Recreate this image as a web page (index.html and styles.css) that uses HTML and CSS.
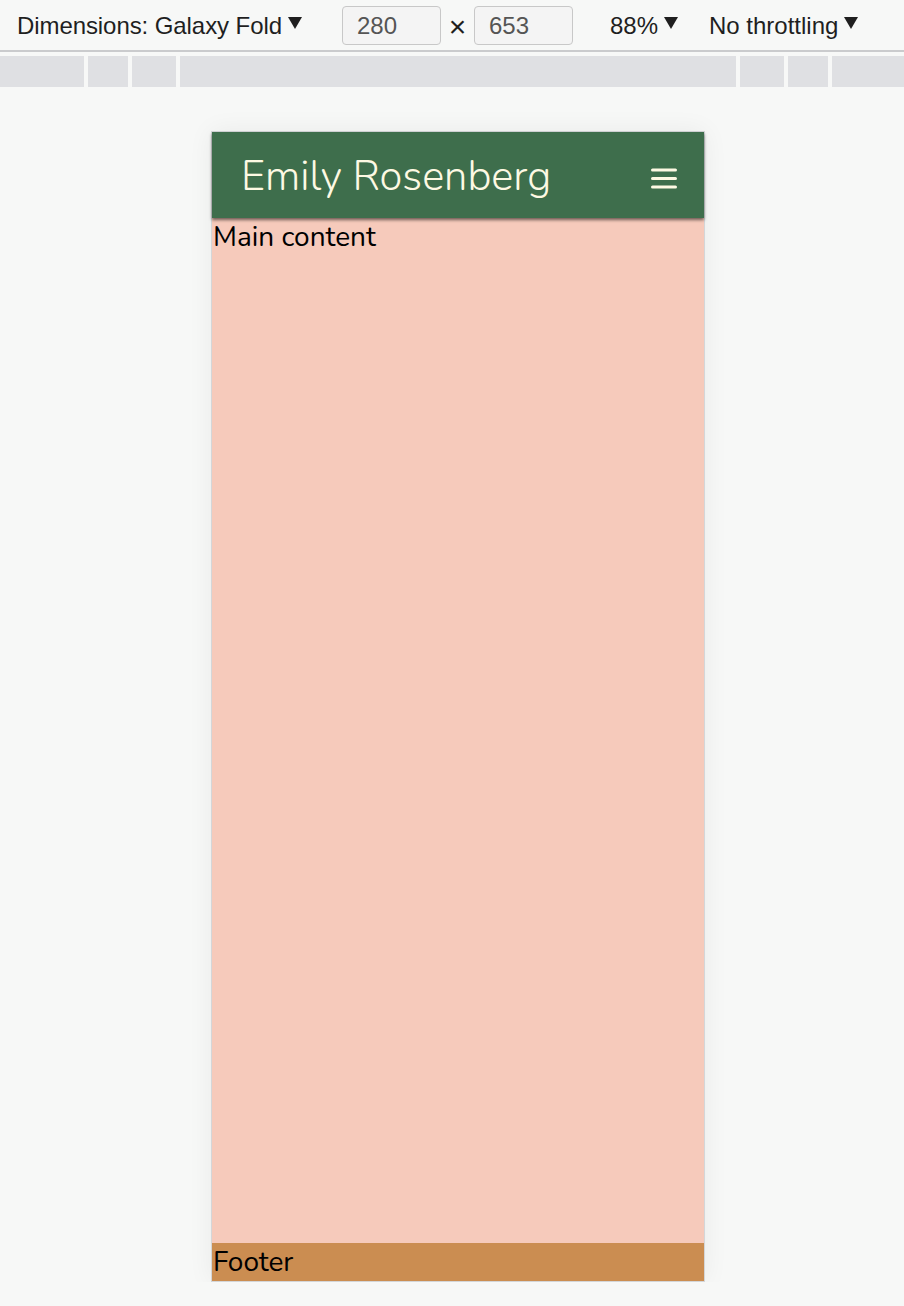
FILE: index.html
```html
<!DOCTYPE html>
<html lang="en">
<head>
<meta charset="utf-8">
<title>Emily Rosenberg</title>
<link rel="stylesheet" href="styles.css">
</head>
<body>
<div class="toolbar">
  <span class="tb-item dims">Dimensions: Galaxy Fold<svg class="caret" width="14" height="12" viewBox="0 0 14 12"><polygon points="0,0 14,0 7,12" /></svg></span>
  <span class="tb-input">280</span>
  <span class="times">&#215;</span>
  <span class="tb-input">653</span>
  <span class="tb-item zoom">88%<svg class="caret" width="14" height="12" viewBox="0 0 14 12"><polygon points="0,0 14,0 7,12" /></svg></span>
  <span class="tb-item throttle">No throttling<svg class="caret" width="14" height="12" viewBox="0 0 14 12"><polygon points="0,0 14,0 7,12" /></svg></span>
</div>
<div class="ruler">
  <div class="seg s1"></div>
  <div class="seg s2"></div>
  <div class="seg s3"></div>
  <div class="seg s4"></div>
  <div class="seg s5"></div>
  <div class="seg s6"></div>
  <div class="seg s7"></div>
</div>
<div class="stage">
  <div class="device">
    <header class="site-header">
      <span class="site-name">Emily Rosenberg</span>
      <svg class="burger" width="26" height="21" viewBox="0 0 26 21" aria-hidden="true">
        <line x1="1.5" y1="2" x2="24.5" y2="2" />
        <line x1="1.5" y1="10.5" x2="24.5" y2="10.5" />
        <line x1="1.5" y1="19" x2="24.5" y2="19" />
      </svg>
    </header>
    <main class="site-main">Main content</main>
    <footer class="site-footer">Footer</footer>
  </div>
</div>
</body>
</html>
```

FILE: styles.css
```css
html, body {
  margin: 0;
  padding: 0;
  background: #f7f8f7;
}

body {
  font-family: "Liberation Sans", Arial, sans-serif;
}

.toolbar {
  height: 50px;
  display: flex;
  align-items: center;
  border-bottom: 2px solid #cacbcd;
  font-size: 24px;
  color: #1f1f1f;
  box-sizing: content-box;
}

.tb-item {
  white-space: nowrap;
  display: flex;
  align-items: center;
  position: relative;
  top: 1px;
}

.caret {
  display: block;
  margin-left: 6px;
  position: relative;
  top: -3px;
}

.caret polygon {
  fill: #1f1f1f;
}

.dims {
  margin-left: 17px;
  letter-spacing: -0.08px;
}

.tb-input {
  width: 99px;
  height: 39px;
  box-sizing: border-box;
  border: 1px solid #c8c8c8;
  border-radius: 4px;
  background: #f4f4f4;
  color: #555;
  padding-left: 14px;
  line-height: 37px;
}

.dims + .tb-input {
  margin-left: 40px;
}

.times {
  width: 33px;
  text-align: center;
  font-size: 30px;
  line-height: 1;
  position: relative;
  top: 2px;
}

.zoom {
  margin-left: 37px;
}

.throttle {
  margin-left: 31px;
}

.ruler {
  margin-top: 4px;
  height: 31px;
  display: flex;
  gap: 4px;
  background: #f7f8f7;
}

.seg {
  background: #dfe0e3;
  height: 100%;
}

.s1 { width: 84px; }
.s2 { width: 40px; }
.s3 { width: 44px; }
.s4 { width: 556px; }
.s5 { width: 44px; }
.s6 { width: 40px; }
.s7 { flex: 1; }

.stage {
  padding-top: 44px;
}

.device {
  margin-left: 211px;
  width: 492px;
  height: 1149px;
  border: 1px solid #d4d6d8;
  display: flex;
  flex-direction: column;
  background: #f6cabb;
  box-shadow: 0 0 24px rgba(0, 0, 0, 0.06);
  font-family: "Nunito", "Lato", "Noto Sans", sans-serif;
  color: #000;
}

.site-header {
  height: 86px;
  flex: none;
  background: #3e6e4c;
  display: flex;
  align-items: center;
  justify-content: space-between;
  padding: 0 27px 0 29px;
  box-shadow: 0 2px 3px rgba(0, 0, 0, 0.55);
  position: relative;
  z-index: 1;
}

.site-name {
  color: #fdf9e3;
  font-size: 41.6px;
  font-weight: 300;
  line-height: 1;
  position: relative;
  top: 2px;
}

.burger {
  display: block;
  position: relative;
  top: 3px;
}

.burger line {
  stroke: #fdf9e3;
  stroke-width: 3;
  stroke-linecap: round;
}

.site-main {
  flex: 1;
  font-size: 28px;
  line-height: 38px;
  padding: 0 0 0 1px;
}

.site-footer {
  flex: none;
  height: 38px;
  background: #cb8d51;
  font-size: 28px;
  line-height: 38px;
  padding-left: 1px;
}
```
